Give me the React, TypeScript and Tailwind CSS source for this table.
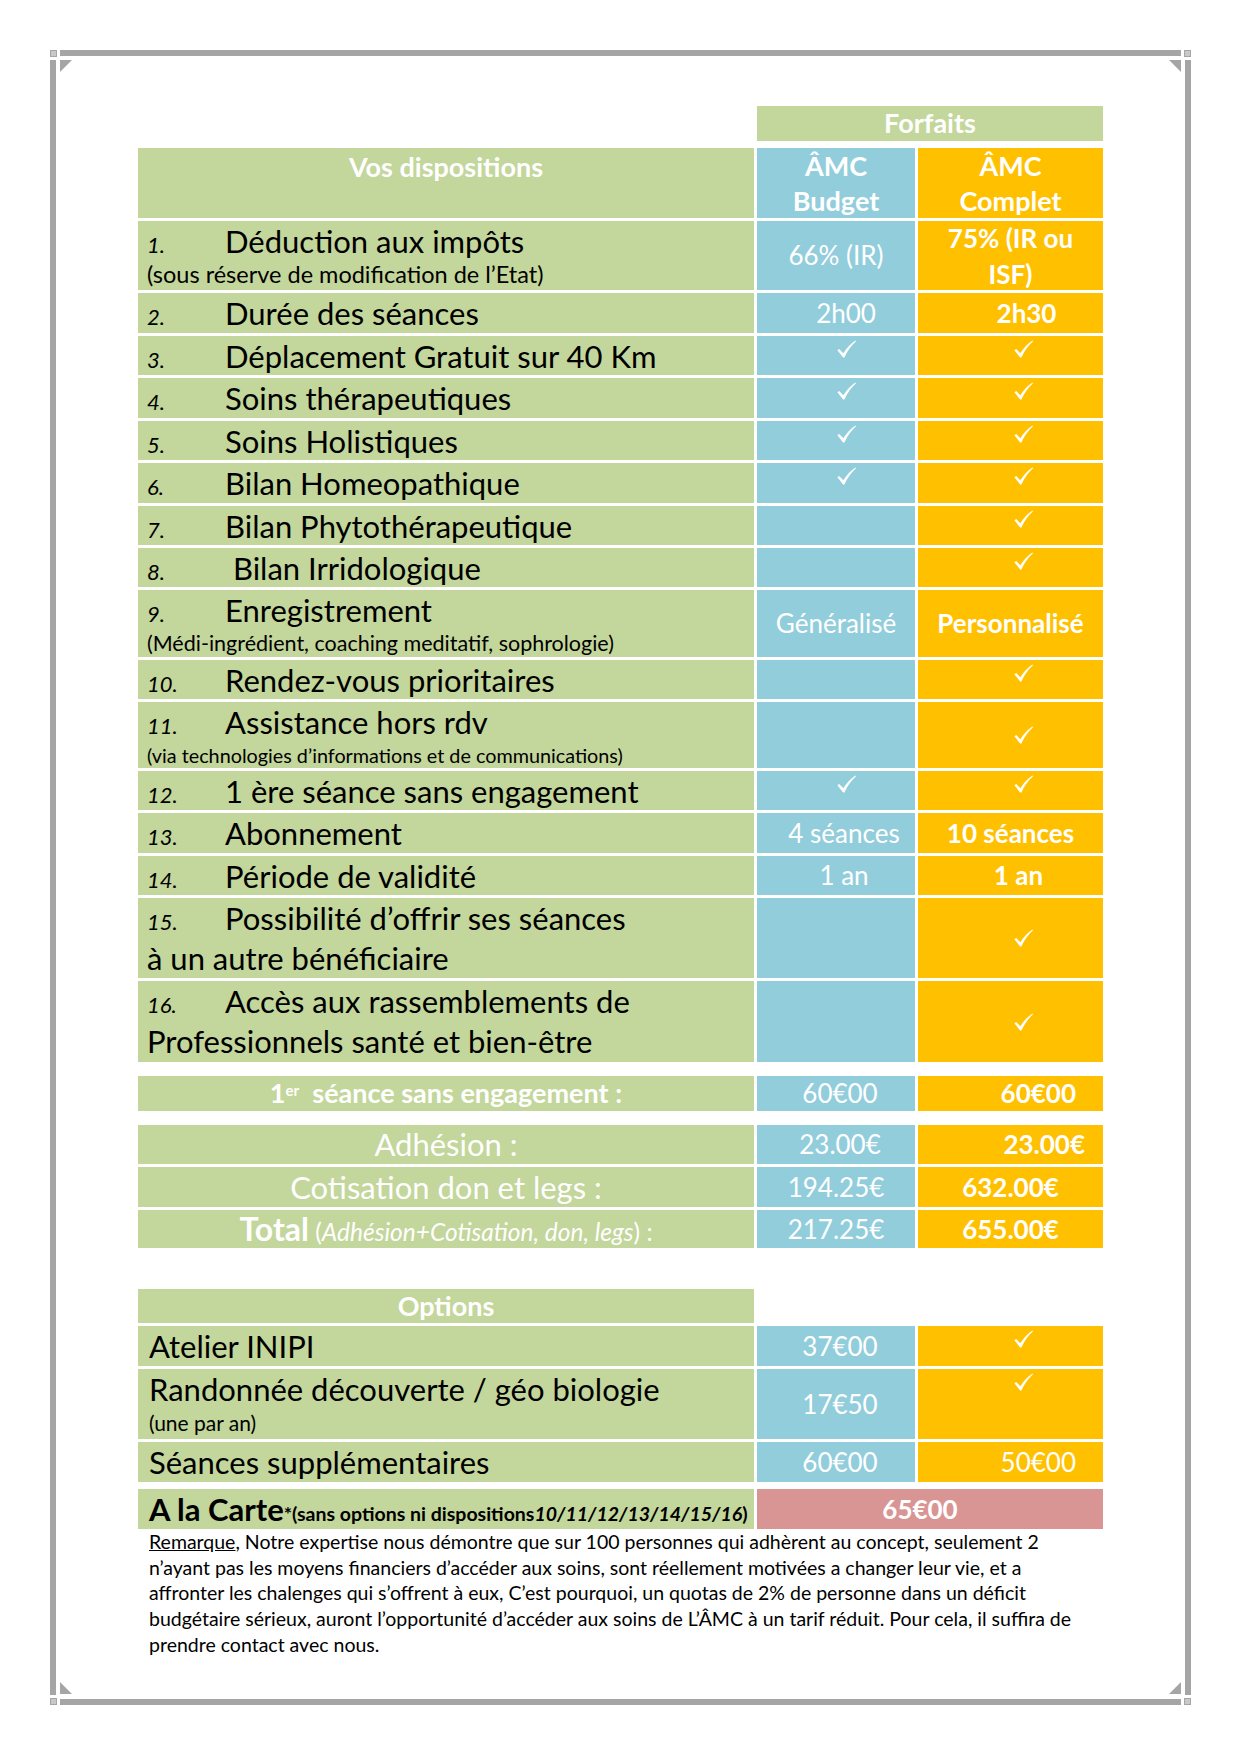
import React from "react";

const G = "bg-[#c3d69b]";
const B = "bg-[#92cddc]";
const O = "bg-[#ffc000]";
const ROW = "grid grid-cols-[616px_158px_185px] grid-rows-[minmax(0,1fr)] gap-x-[3px]";

function Check() {
  return (
    <svg width="19" height="18" viewBox="0 0 19 18" fill="white">
      <path d="M0.4 10.3 L2.2 8.9 L6.3 13.2 C9.4 8.4 13.4 4 18.4 0.5 L19 1.3 C14.6 5.4 10.6 10.6 7.4 17.4 L6.1 17.5 Z" />
    </svg>
  );
}

function Triangle({ corner }: { corner: "tl" | "tr" | "bl" | "br" }) {
  const pts = {
    tl: "0,0 12,0 0,12",
    tr: "0,0 12,0 12,12",
    bl: "0,0 0,12 12,12",
    br: "12,0 12,12 0,12",
  }[corner];
  return (
    <svg width="12" height="12" viewBox="0 0 12 12">
      <polygon points={pts} fill="#a5a5a5" />
    </svg>
  );
}

function Feat({ n, t, sub, subSize, cont }: { n: string; t: string; sub?: string; subSize?: string; cont?: string }) {
  return (
    <div className="pl-[9px] text-black">
      <div className="flex h-[40px] items-baseline leading-[40px]">
        <span className="w-[78px] shrink-0 text-[22px] italic">{n}</span>
        <span className="whitespace-nowrap text-[31px]">{t}</span>
      </div>
      {sub && <div className={`whitespace-nowrap leading-[27px] ${subSize}`}>{sub}</div>}
      {cont && <div className="whitespace-nowrap text-[31px] leading-[40px]">{cont}</div>}
    </div>
  );
}

function BlueCell({ children, top }: { children?: React.ReactNode; top?: boolean }) {
  return (
    <div className={`${B} flex justify-center text-[26px] text-white ${top ? "items-start pt-[4px]" : "items-center"}`}>
      {children}
    </div>
  );
}

function OrangeCell({ children, top }: { children?: React.ReactNode; top?: boolean }) {
  return (
    <div className={`${O} flex justify-center text-[26px] font-bold text-white ${top ? "items-start pt-[4px]" : "items-center"}`}>
      {children}
    </div>
  );
}

const ck = (
  <span className="ml-[20px]">
    <Check />
  </span>
);
const ckO = (
  <span className="ml-[26px]">
    <Check />
  </span>
);

export default function App() {
  return (
    <div className="min-h-[1754px] w-[1240px] bg-white pl-[50px] pt-[50px] font-['Lato',sans-serif]">
      <div className="relative h-[1655px] w-[1141px] border-[6px] border-[#a5a5a5] pl-[82px] pt-[50px]">
        {/* page border corners */}
        <div className="absolute -left-[6px] -top-[6px] h-[10px] w-[10px] bg-white">
          <div className="h-[7px] w-[7px] border border-[#a5a5a5] bg-[#c8c8c8]" />
        </div>
        <div className="absolute -right-[6px] -top-[6px] flex h-[10px] w-[10px] justify-end bg-white">
          <div className="h-[7px] w-[7px] border border-[#a5a5a5] bg-[#c8c8c8]" />
        </div>
        <div className="absolute -bottom-[6px] -left-[6px] flex h-[10px] w-[10px] items-end bg-white">
          <div className="h-[7px] w-[7px] border border-[#a5a5a5] bg-[#c8c8c8]" />
        </div>
        <div className="absolute -bottom-[6px] -right-[6px] flex h-[10px] w-[10px] items-end justify-end bg-white">
          <div className="h-[7px] w-[7px] border border-[#a5a5a5] bg-[#c8c8c8]" />
        </div>
        <div className="absolute left-[4px] top-[4px]"><Triangle corner="tl" /></div>
        <div className="absolute right-[4px] top-[4px]"><Triangle corner="tr" /></div>
        <div className="absolute bottom-[5px] left-[4px]"><Triangle corner="bl" /></div>
        <div className="absolute bottom-[5px] right-[4px]"><Triangle corner="br" /></div>

        {/* Dispositions table */}
        <div className="flex flex-col gap-y-[3px]">
          <div className={`${ROW} h-[35px]`}>
            <div />
            <div className={`${G} col-span-2 flex items-center justify-center text-[27px] font-bold text-white`}>
              Forfaits
            </div>
          </div>
          <div className={`${ROW} mt-[4px] h-[70px]`}>
            <div className={`${G} text-center text-[27px] font-bold leading-[38px] text-white`}>Vos dispositions</div>
            <div className={`${B} flex items-center justify-center text-center text-[27px] font-bold leading-[35px] text-white`}>
              ÂMC<br />Budget
            </div>
            <div className={`${O} flex items-center justify-center text-center text-[27px] font-bold leading-[35px] text-white`}>
              ÂMC<br />Complet
            </div>
          </div>

          <div className={`${ROW} h-[69px]`}>
            <div className={G}><Feat n="1." t="Déduction aux impôts" sub="(sous réserve de modification de l’Etat)" subSize="text-[23.5px]" /></div>
            <BlueCell>66% (IR)</BlueCell>
            <OrangeCell><span className="text-center leading-[36px]">75% (IR ou<br />ISF)</span></OrangeCell>
          </div>
          <div className={`${ROW} h-[40px]`}>
            <div className={G}><Feat n="2." t="Durée des séances" /></div>
            <BlueCell><span className="ml-[20px]">2h00</span></BlueCell>
            <OrangeCell><span className="ml-[32px]">2h30</span></OrangeCell>
          </div>
          <div className={`${ROW} h-[39px]`}>
            <div className={G}><Feat n="3." t="Déplacement Gratuit sur 40 Km" /></div>
            <BlueCell top>{ck}</BlueCell>
            <OrangeCell top>{ckO}</OrangeCell>
          </div>
          <div className={`${ROW} h-[40px]`}>
            <div className={G}><Feat n="4." t="Soins thérapeutiques" /></div>
            <BlueCell top>{ck}</BlueCell>
            <OrangeCell top>{ckO}</OrangeCell>
          </div>
          <div className={`${ROW} h-[39px]`}>
            <div className={G}><Feat n="5." t="Soins Holistiques" /></div>
            <BlueCell top>{ck}</BlueCell>
            <OrangeCell top>{ckO}</OrangeCell>
          </div>
          <div className={`${ROW} h-[40px]`}>
            <div className={G}><Feat n="6." t="Bilan Homeopathique" /></div>
            <BlueCell top>{ck}</BlueCell>
            <OrangeCell top>{ckO}</OrangeCell>
          </div>
          <div className={`${ROW} h-[39px]`}>
            <div className={G}><Feat n="7." t="Bilan Phytothérapeutique" /></div>
            <BlueCell />
            <OrangeCell top>{ckO}</OrangeCell>
          </div>
          <div className={`${ROW} h-[39px]`}>
            <div className={G}><Feat n="8." t={"\u00a0Bilan Irridologique"} /></div>
            <BlueCell />
            <OrangeCell top>{ckO}</OrangeCell>
          </div>
          <div className={`${ROW} h-[67px]`}>
            <div className={G}><Feat n="9." t="Enregistrement" sub="(Médi-ingrédient, coaching meditatif, sophrologie)" subSize="text-[21.5px]" /></div>
            <BlueCell>Généralisé</BlueCell>
            <OrangeCell>Personnalisé</OrangeCell>
          </div>
          <div className={`${ROW} h-[39px]`}>
            <div className={G}><Feat n="10." t="Rendez-vous prioritaires" /></div>
            <BlueCell />
            <OrangeCell top>{ckO}</OrangeCell>
          </div>
          <div className={`${ROW} h-[66px]`}>
            <div className={G}><Feat n="11." t="Assistance hors rdv" sub="(via technologies d’informations et de communications)" subSize="text-[19.8px]" /></div>
            <BlueCell />
            <OrangeCell>{ckO}</OrangeCell>
          </div>
          <div className={`${ROW} h-[39px]`}>
            <div className={G}><Feat n="12." t="1 ère séance sans engagement" /></div>
            <BlueCell top>{ck}</BlueCell>
            <OrangeCell top>{ckO}</OrangeCell>
          </div>
          <div className={`${ROW} h-[40px]`}>
            <div className={G}><Feat n="13." t="Abonnement" /></div>
            <BlueCell><span className="ml-[16px]">4 séances</span></BlueCell>
            <OrangeCell>10 séances</OrangeCell>
          </div>
          <div className={`${ROW} h-[39px]`}>
            <div className={G}><Feat n="14." t="Période de validité" /></div>
            <BlueCell><span className="ml-[16px]">1 an</span></BlueCell>
            <OrangeCell><span className="ml-[16px]">1 an</span></OrangeCell>
          </div>
          <div className={`${ROW} h-[80px]`}>
            <div className={G}><Feat n="15." t="Possibilité d’offrir ses séances" cont="à un autre bénéficiaire" /></div>
            <BlueCell />
            <OrangeCell>{ckO}</OrangeCell>
          </div>
          <div className={`${ROW} h-[81px]`}>
            <div className={G}><Feat n="16." t="Accès aux rassemblements de" cont="Professionnels santé et bien-être" /></div>
            <BlueCell />
            <OrangeCell>{ckO}</OrangeCell>
          </div>
        </div>

        {/* Tarifs */}
        <div className={`${ROW} mt-[14px] h-[35px]`}>
          <div className={`${G} flex items-center justify-center text-[27px] font-bold text-white`}>
            <span>
              1<sup className="text-[15px]">er</sup>&nbsp; séance sans engagement :
            </span>
          </div>
          <BlueCell><span className="ml-[8px]">60€00</span></BlueCell>
          <div className={`${O} flex items-center justify-end pr-[27px] text-[26px] font-bold text-white`}>60€00</div>
        </div>

        <div className="mt-[14px] flex flex-col gap-y-[3px]">
          <div className={`${ROW} h-[39px]`}>
            <div className={`${G} flex items-center justify-center text-[31px] text-white`}>Adhésion :</div>
            <BlueCell><span className="ml-[8px]">23.00€</span></BlueCell>
            <div className={`${O} flex items-center justify-end pr-[18px] text-[26px] font-bold text-white`}>23.00€</div>
          </div>
          <div className={`${ROW} h-[40px]`}>
            <div className={`${G} flex items-center justify-center text-[31px] text-white`}>Cotisation don et legs :</div>
            <BlueCell>194.25€</BlueCell>
            <OrangeCell>632.00€</OrangeCell>
          </div>
          <div className={`${ROW} h-[38px]`}>
            <div className={`${G} flex items-center justify-center text-white`}>
              <span className="whitespace-nowrap">
                <span className="text-[32px] font-bold">Total</span>
                <span className="text-[24.5px]"> (<i>Adhésion+Cotisation, don, legs</i>) :</span>
              </span>
            </div>
            <BlueCell>217.25€</BlueCell>
            <OrangeCell>655.00€</OrangeCell>
          </div>
        </div>

        {/* Options */}
        <div className="mt-[41px] flex flex-col gap-y-[3px]">
          <div className={`${ROW} h-[34px]`}>
            <div className={`${G} flex items-center justify-center text-[27px] font-bold text-white`}>Options</div>
            <div />
            <div />
          </div>
          <div className={`${ROW} h-[40px]`}>
            <div className={`${G} pl-[11px] text-[31px] leading-[40px] text-black`}>Atelier INIPI</div>
            <BlueCell><span className="ml-[8px]">37€00</span></BlueCell>
            <OrangeCell top>{ckO}</OrangeCell>
          </div>
          <div className={`${ROW} h-[70px]`}>
            <div className={`${G} pl-[11px] text-black`}>
              <div className="text-[31px] leading-[40px]">Randonnée découverte / géo biologie</div>
              <div className="text-[21px] leading-[27px]">(une par an)</div>
            </div>
            <BlueCell><span className="ml-[8px]">17€50</span></BlueCell>
            <OrangeCell top>{ckO}</OrangeCell>
          </div>
          <div className={`${ROW} h-[40px]`}>
            <div className={`${G} pl-[11px] text-[31px] leading-[40px] text-black`}>Séances supplémentaires</div>
            <BlueCell><span className="ml-[8px]">60€00</span></BlueCell>
            <div className={`${O} flex items-center justify-end pr-[27px] text-[26px] text-white`}>50€00</div>
          </div>
          <div className={`${ROW} mt-[4px] h-[40px]`}>
            <div className={`${G} flex items-baseline whitespace-nowrap pl-[11px] leading-[40px] text-black`}>
              <span className="text-[31px] font-bold">A la Carte</span>
              <span className="text-[19.5px] font-bold">
                *(sans options ni dispositions<i>10/11/12/13/14/15/16</i>)
              </span>
            </div>
            <div className="col-span-2 flex items-center justify-center bg-[#d99594] pr-[20px] text-[26px] font-bold text-white">
              65€00
            </div>
          </div>
        </div>

        {/* Remarque */}
        <div className="pl-[11px] text-[19.5px] leading-[25.7px] text-black">
          <div className="whitespace-nowrap">
            <span className="underline">Remarque</span>, Notre expertise nous démontre que sur 100 personnes qui adhèrent au concept, seulement 2
          </div>
          <div className="whitespace-nowrap">
            n’ayant pas les moyens financiers d’accéder aux soins, sont réellement motivées a changer leur vie, et a
          </div>
          <div className="whitespace-nowrap">
            affronter les chalenges qui s’offrent à eux, C’est pourquoi, un quotas de 2% de personne dans un déficit
          </div>
          <div className="whitespace-nowrap">
            budgétaire sérieux, auront l’opportunité d’accéder aux soins de L’ÂMC à un tarif réduit. Pour cela, il suffira de
          </div>
          <div className="whitespace-nowrap">prendre contact avec nous.</div>
        </div>
      </div>
    </div>
  );
}
